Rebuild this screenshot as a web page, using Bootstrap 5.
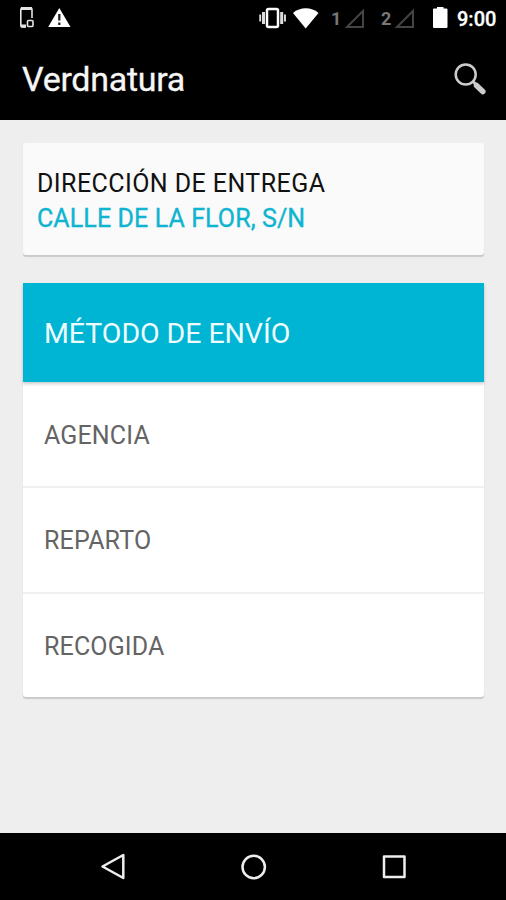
<!DOCTYPE html>
<html lang="es">
<head>
<meta charset="utf-8">
<meta name="viewport" content="width=device-width, initial-scale=1">
<title>Verdnatura</title>
<link href="https://cdn.jsdelivr.net/npm/bootstrap@5.3.0/dist/css/bootstrap.min.css" rel="stylesheet">
<style>
body{font-family:Roboto,"Liberation Sans",sans-serif;background:#eee;height:900px;overflow:hidden}
.statusbar{height:38px;color:#fff}
.statusbar svg,.sysnav svg{display:block;flex:none}
.sim{color:#777;font-size:18px;font-weight:700;line-height:38px;width:13px}
.clock{font-size:20px;font-weight:500;line-height:38px;width:48px;padding-left:7px;white-space:nowrap;-webkit-text-stroke:.3px #fff}
.appbar{height:82px;padding:0 16px 0 22px}
.apptitle{font-size:34px;line-height:80px;letter-spacing:-.28px;color:#f6f6f6;-webkit-text-stroke:.3px #f6f6f6}
main{padding:23px 22px 0 23px}
.address{height:112px;background:#fafafa;border-radius:3px;padding:23px 14px 0;box-shadow:0 2px 1px #c9c9c9;font-size:25px;line-height:35px;margin-bottom:28px}
.address p,.methods p{white-space:nowrap}
.caption-line{color:#111;letter-spacing:.43px}
.street{color:#0fb4d1;letter-spacing:.1px;line-height:35px;-webkit-text-stroke:.35px #0fb4d1}
.methods{background:#fff;border-radius:0 0 3px 3px;box-shadow:0 2px 1px #c9c9c9}
.heading{height:99px;background:#00b5d3;color:#effcff;font-size:28.500px;letter-spacing:-.05px;line-height:102px;padding-left:21px;box-shadow:0 2px 3px rgba(0,0,0,.2)}
.choice{height:104px;line-height:107px;font-size:25px;letter-spacing:.15px;color:#646464;padding-left:21px}
.choice+.choice{border-top:2px solid #f0f0f0;height:105.500px;line-height:106px}
.sysnav{height:67px}
</style>
</head>
<body class="d-flex flex-column">
<div class="statusbar bg-black d-flex flex-shrink-0">
  <svg class="ms-3" width="26" height="38" viewBox="16 0 26 38" fill="none" stroke="#e5e5e5" stroke-width="1.600"><path d="M26 27h-3.700a1.500 1.500 0 0 1-1.500-1.500V9.500A1.500 1.500 0 0 1 22.300 8h8.200A1.500 1.500 0 0 1 32 9.500V18"/><path d="M21 8.500h11M21 26h5" stroke-width="2.800"/><rect x="27.500" y="20.500" width="5.500" height="6" rx="1"/></svg>
  <svg class="ms-1" width="28" height="38" viewBox="46 0 28 38"><path d="M59.300 8 70.500 27H48.200Z" fill="#fff"/><path d="M59.300 14v6.500M59.300 22.500V25" stroke="#222" stroke-width="2.300"/></svg>
  <svg class="ms-auto" width="32" height="38" viewBox="256 0 32 38" fill="none" stroke="#ddd"><rect x="267" y="9" width="11" height="18" rx="1.500" stroke="#fff" stroke-width="2.500"/><path d="M263.500 12v12M281.700 12v12" stroke-width="3"/><path d="M260.200 14.500v7M285 14.500v7" stroke-width="1.900"/></svg>
  <svg width="39" height="38" viewBox="288 0 39 38"><path d="M293 13C300 6.800 311.500 6.800 318.500 13L305.700 28.500Z" fill="#fff"/></svg>
  <span class="sim ms-1">1</span>
  <svg width="37" height="38" viewBox="343 0 37 38"><path d="M362 11v16h-16Z" fill="none" stroke="#444" stroke-width="2"/></svg>
  <span class="sim">2</span>
  <svg width="34" height="38" viewBox="394 0 34 38"><path d="M413 11v16h-16Z" fill="none" stroke="#444" stroke-width="2"/></svg>
  <svg width="22" height="38" viewBox="428 0 22 38"><path d="M437 7h6.500v1.500h3q1 0 1 1V27q0 1-1 1h-12.500q-1 0-1-1V9.500q0-1 1-1h3Z" fill="#fff"/></svg>
  <span class="clock me-2">9:00</span>
</div>
<header class="appbar bg-black d-flex justify-content-between align-items-center flex-shrink-0">
  <h1 class="apptitle fw-normal m-0">Verdnatura</h1>
  <svg width="38" height="40" viewBox="452 58 38 40" fill="none" stroke="#ccc"><circle cx="465.700" cy="73.500" r="10" stroke-width="2.500"/><path d="m473 80.500 3 3" stroke-width="3"/><path d="m476.500 84.500 6.300 6" stroke-width="5.500" stroke-linecap="round"/></svg>
</header>
<main class="flex-grow-1">
  <section class="address">
    <p class="m-0 caption-line">DIRECCIÓN DE ENTREGA</p>
    <p class="m-0 street">CALLE DE LA FLOR, S/N</p>
  </section>
  <section class="methods">
    <h2 class="heading fw-normal m-0 position-relative">MÉTODO DE ENVÍO</h2>
    <p class="choice m-0">AGENCIA</p>
    <p class="choice m-0">REPARTO</p>
    <p class="choice m-0">RECOGIDA</p>
  </section>
</main>
<nav class="sysnav bg-black d-flex justify-content-center align-items-center flex-shrink-0" aria-label="Sistema">
  <svg width="506" height="67" viewBox="0 833 506 67" fill="none" stroke="#eee" stroke-width="2.500" stroke-linejoin="round"><path d="M123.300 855v23L102.500 866.500Z"/><circle cx="253.700" cy="867" r="11.200"/><rect x="384" y="856.500" width="20.500" height="20.500"/></svg>
</nav>
<script src="https://cdn.jsdelivr.net/npm/bootstrap@5.3.0/dist/js/bootstrap.bundle.min.js"></script>
</body>
</html>
